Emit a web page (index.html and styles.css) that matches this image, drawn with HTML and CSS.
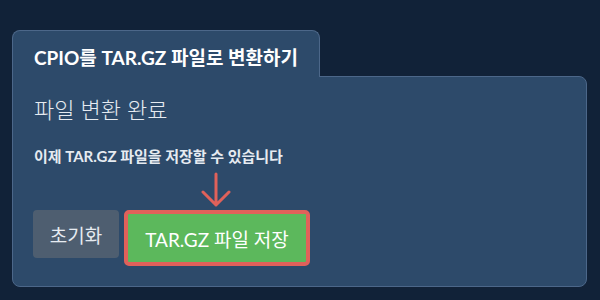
FILE: index.html
```html
<!DOCTYPE html>
<html lang="ko">
<head>
    <meta charset="UTF-8">
    <title>CPIO를 TAR.GZ 파일로 변환하기</title>
    <link rel="stylesheet" href="styles.css">
</head>
<body>
    <div class="converter">
        <div class="tab">CPIO를 TAR.GZ 파일로 변환하기</div>
        <div class="panel">
            <h2 class="status">파일 변환 완료</h2>
            <p class="note">이제 TAR.GZ 파일을 저장할 수 있습니다</p>
            <div class="arrow">
                <svg width="30" height="36" viewBox="0 0 30 36">
                    <path d="M15 2 V33 M2 20 L15 33 L28 20" fill="none" stroke="#e0615a" stroke-width="3" stroke-linecap="round" stroke-linejoin="round"/>
                </svg>
            </div>
            <div class="actions">
                <button class="btn btn-reset">초기화</button>
                <button class="btn btn-save">TAR.GZ 파일 저장</button>
            </div>
        </div>
    </div>
</body>
</html>
```

FILE: styles.css
```css
body {
    margin: 0;
    background-color: #112238;
    font-family: Lato, "Noto Sans CJK KR", sans-serif;
    color: #ffffff;
}
.converter {
    padding: 30px 13px 0 12px;
}
.tab {
    display: inline-block;
    position: relative;
    z-index: 1;
    box-sizing: border-box;
    height: 47px;
    padding: 12px 21px 0 21px;
    margin-bottom: -1px;
    background: #2d4a6a;
    border: 1px solid #4c6789;
    border-bottom: none;
    border-radius: 8px 8px 0 0;
    font-size: 19px;
    font-weight: bold;
}
.panel {
    background: #2d4a6a;
    border: 1px solid #4c6789;
    border-radius: 0 8px 8px 8px;
    padding: 19px 20px 19px 20px;
    height: 171px;
}
.status {
    margin: 0 0 0 1px;
    font-size: 22px;
    font-weight: 300;
    color: #e6ebf1;
    line-height: 28px;
}
.note {
    margin: 22px 0 0 1px;
    font-size: 15px;
    font-weight: bold;
    color: #e6ebf1;
    line-height: 20px;
}
.arrow {
    margin: 6px 0 0 168px;
    height: 38px;
}
.arrow svg {
    display: block;
}
.actions {
    display: flex;
    align-items: flex-start;
    gap: 5px;
}
.btn {
    border: none;
    border-radius: 4px;
    font-family: Lato, "Noto Sans CJK KR", sans-serif;
    font-size: 19px;
    color: #ffffff;
    cursor: pointer;
    padding: 0;
}
.btn-reset {
    background: #4e5e70;
    width: 86px;
    height: 48px;
    color: #e6ebf1;
}
.btn-save {
    background: #5cb85c;
    width: 186px;
    height: 56px;
    border: 4px solid #e0615a;
    border-radius: 5px;
}
```
